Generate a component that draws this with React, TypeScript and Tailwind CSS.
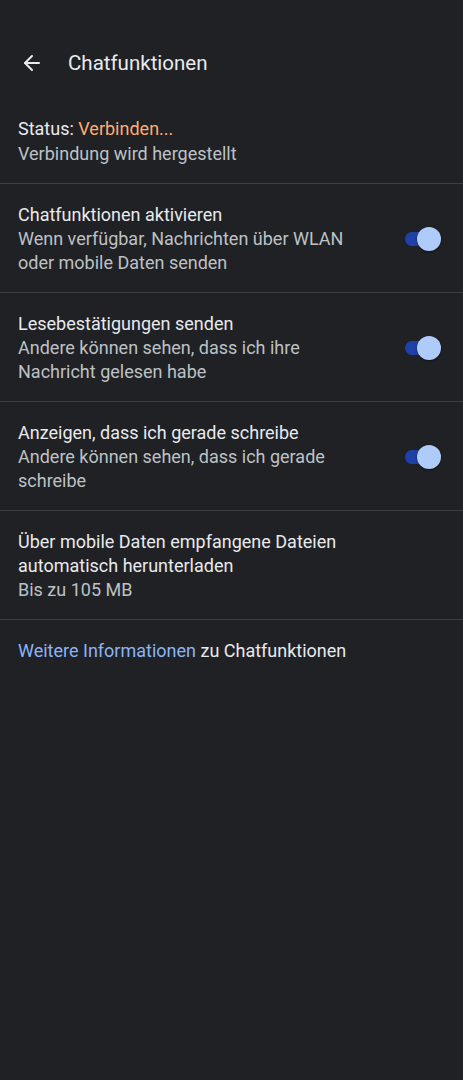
import { ArrowLeft } from "lucide-react";

const rows = [
  {
    title: "Chatfunktionen aktivieren",
    sub: "Wenn verfügbar, Nachrichten über WLAN oder mobile Daten senden",
  },
  {
    title: "Lesebestätigungen senden",
    sub: "Andere können sehen, dass ich ihre Nachricht gelesen habe",
  },
  {
    title: "Anzeigen, dass ich gerade schreibe",
    sub: "Andere können sehen, dass ich gerade schreibe",
  },
];

function Toggle() {
  // eingeschalteter Schalter im Material-Stil
  return (
    <div className="relative w-[36px] h-[24px] flex items-center">
      <div className="w-[36px] h-[14px] rounded-full bg-[#1f40a6]" />
      <div className="absolute right-0 top-0 w-[24px] h-[24px] rounded-full bg-[#aecbfa] shadow-[0_1px_2px_rgba(0,0,0,0.5)]" />
    </div>
  );
}

export default function App() {
  return (
    <div
      className="min-h-[1080px] w-full bg-[#202124] text-[#e8eaed] pt-[28px]"
      style={{ fontFamily: "Roboto, 'Noto Sans', sans-serif" }}
    >
      {/* Kopfzeile */}
      <header className="h-[70px] flex items-center px-[20px]">
        <ArrowLeft size={24} strokeWidth={2} className="text-[#e8eaed]" />
        <h1 className="ml-[24px] text-[20.5px] text-[#e8eaed]">Chatfunktionen</h1>
      </header>

      <div className="px-[18px] pt-[18px] pb-[17px] text-[18px] leading-[25px] border-b border-[#3c4043]">
        <div>
          Status: <span className="text-[#fcad70]">Verbinden...</span>
        </div>
        <div className="text-[#bdc1c6]">Verbindung wird hergestellt</div>
      </div>

      {rows.map((r) => (
        <div
          key={r.title}
          className="flex items-center pl-[18px] pr-[22px] pt-[19px] pb-[17px] border-b border-[#3c4043]"
        >
          <div className="flex-1 pr-[40px] text-[18px] leading-[24px]">
            <div>{r.title}</div>
            <div className="text-[#bdc1c6]">{r.sub}</div>
          </div>
          <Toggle />
        </div>
      ))}

      <div className="px-[18px] pt-[19px] pb-[17px] text-[18px] leading-[24px] border-b border-[#3c4043]">
        <div className="pr-[60px]">Über mobile Daten empfangene Dateien automatisch herunterladen</div>
        <div className="text-[#bdc1c6]">Bis zu 105 MB</div>
      </div>

      <div className="px-[18px] pt-[19px] text-[18px] leading-[24px]">
        <span className="text-[#8ab4f8]">Weitere Informationen</span> zu Chatfunktionen
      </div>
    </div>
  );
}
